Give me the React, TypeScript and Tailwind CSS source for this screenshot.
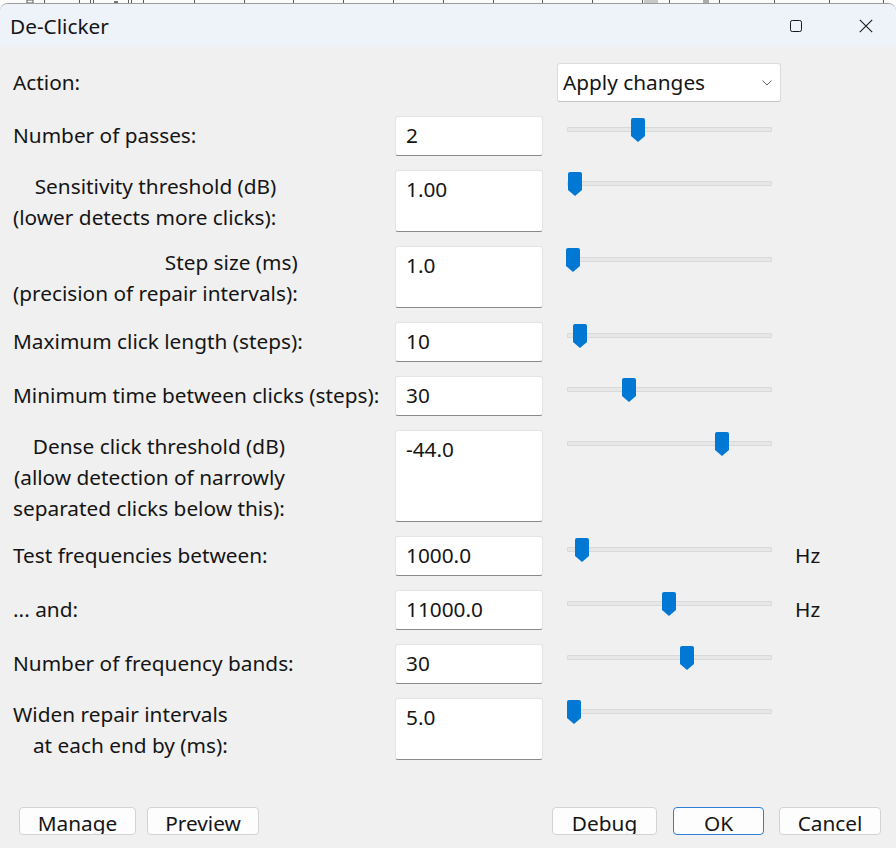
import React from "react";

type Row = {
  label: string[];
  value: string;
  box: string;
  thumb: number;
  unit?: string;
};

const rows: Row[] = [
  { label: ["Number of passes:"], value: "2", box: "h-[40px]", thumb: 71 },
  {
    label: ["Sensitivity threshold (dB)", "(lower detects more clicks):"],
    value: "1.00",
    box: "h-[62px]",
    thumb: 8,
  },
  {
    label: ["Step size (ms)", "(precision of repair intervals):"],
    value: "1.0",
    box: "h-[62px]",
    thumb: 6,
  },
  { label: ["Maximum click length (steps):"], value: "10", box: "h-[40px]", thumb: 13 },
  { label: ["Minimum time between clicks (steps):"], value: "30", box: "h-[40px]", thumb: 62 },
  {
    label: [
      "Dense click threshold (dB)",
      "(allow detection of narrowly",
      "separated clicks below this):",
    ],
    value: "-44.0",
    box: "h-[92px]",
    thumb: 155,
  },
  { label: ["Test frequencies between:"], value: "1000.0", box: "h-[40px]", thumb: 15, unit: "Hz" },
  { label: ["... and:"], value: "11000.0", box: "h-[40px]", thumb: 102, unit: "Hz" },
  { label: ["Number of frequency bands:"], value: "30", box: "h-[40px]", thumb: 120 },
  {
    label: ["Widen repair intervals", "at each end by (ms):"],
    value: "5.0",
    box: "h-[62px]",
    thumb: 7,
  },
];

// tick marks of the ruler belonging to the window behind the dialog
const ticks = [44, 79, 90, 93, 128, 131, 143, 194, 244, 293, 343, 393, 443, 493, 542, 592, 642, 669, 719, 774, 829, 883];

function Ruler() {
  return (
    <div className="h-[3px] bg-[#fbfbfb]">
      <svg width="896" height="3" className="block">
        {ticks.map((x) => (
          <rect key={x} x={x} y={0} width={1} height={3} fill="#5a5a5a" />
        ))}
        <rect x={27} y={0} width={6} height={3} fill="none" stroke="#5a5a5a" strokeWidth={1} />
        <rect x={114} y={1} width={4} height={2} fill="#777" />
        <rect x={644} y={0} width={14} height={3} fill="#c8c8c8" />
        <rect x={703} y={0} width={6} height={3} fill="#aaa" />
      </svg>
    </div>
  );
}

function Slider({ pos }: { pos: number }) {
  return (
    <div className="relative mt-[2px] ml-[24px] h-[24px] w-[205px] shrink-0">
      <div className="absolute left-0 right-0 top-[9px] h-[5px] rounded-[1px] border border-[#d9d9d9] bg-[#e7e7e7]" />
      <svg
        width="14"
        height="24"
        viewBox="0 0 14 24"
        className="absolute top-0"
        style={{ left: pos - 7 }}
      >
        <path d="M0 2 Q0 0 2 0 H12 Q14 0 14 2 V18 L7 24 L0 18 Z" fill="#0078d4" />
      </svg>
    </div>
  );
}

function Field({ value, box }: { value: string; box: string }) {
  return (
    <div
      className={`${box} w-[148px] shrink-0 rounded-[3px] border border-[#e4e4e4] border-b-[#8a8a8a] bg-white pl-[10px] pt-[3px] leading-[31px]`}
    >
      {value}
    </div>
  );
}

function Button({ children, primary }: { children: React.ReactNode; primary?: boolean }) {
  return (
    <div
      className={`h-[28px] overflow-hidden rounded-[4px] border bg-[#fdfdfd] pt-[2px] text-center leading-[26px] ${
        primary ? "border-[#2f7fd3]" : "border-[#d3d3d3]"
      }`}
    >
      {children}
    </div>
  );
}

export default function App() {
  return (
    <div
      className="h-[848px] w-[896px] overflow-hidden bg-[#fbfbfb] text-[20.8px] text-[#151515]"
      style={{ fontFamily: '"Noto Sans", "Open Sans", sans-serif' }}
    >
      <Ruler />
      <div className="flex h-[845px] flex-col overflow-hidden rounded-t-[8px] border-t border-[#9c9c9c] bg-[#f0f0f0]">
        {/* title bar */}
        <div className="flex h-[43px] shrink-0 items-center bg-[#eef2f9]">
          <div className="ml-[10px] leading-[30px]">De-Clicker</div>
          <div className="ml-auto flex items-center">
            <svg width="12" height="12" viewBox="0 0 12 12" className="mr-[57px]">
              <rect x="0.5" y="0.5" width="11" height="11" rx="1.8" fill="none" stroke="#1a1a1a" strokeWidth="1" />
            </svg>
            <svg width="14" height="14" viewBox="0 0 14 14" className="mr-[23px]">
              <path d="M0.8 0.8 L13.2 13.2 M13.2 0.8 L0.8 13.2" stroke="#1a1a1a" strokeWidth="1.1" />
            </svg>
          </div>
        </div>

        {/* body */}
        <div className="flex flex-1 flex-col pl-[13px] pt-[16px]">
          <div className="flex flex-col gap-[14px]">
            <div className="flex h-[39px] items-center">
              <div className="w-[544px] leading-[31px]">Action:</div>
              <div className="flex h-[39px] w-[224px] items-center rounded-[3px] border border-[#dcdcdc] border-b-[#c4c4c4] bg-white pl-[5px] pr-[8px]">
                <span className="leading-[31px]">Apply changes</span>
                <svg width="10" height="6" viewBox="0 0 10 6" className="ml-auto">
                  <path d="M0.5 0.5 L5 5 L9.5 0.5" fill="none" stroke="#5f5f5f" strokeWidth="1" />
                </svg>
              </div>
            </div>

            {rows.map((r) => {
              const single = r.label.length === 1;
              return (
                <div key={r.value + r.label[0]} className={`${r.box} flex items-start`}>
                  <div className={`w-[382px] shrink-0 ${single ? "pt-[4px]" : "pt-[1px]"}`}>
                    <div className="w-fit text-right leading-[31px]">
                      {r.label.map((l) => (
                        <div key={l}>{l}</div>
                      ))}
                    </div>
                  </div>
                  <Field value={r.value} box={r.box} />
                  <Slider pos={r.thumb} />
                  {r.unit && <div className="ml-[23px] pt-[4px] leading-[31px]">{r.unit}</div>}
                </div>
              );
            })}
          </div>

          {/* dialog buttons */}
          <div className="mt-auto mb-[13px] flex items-center pr-[15px]">
            <div className="ml-[6px] w-[117px]">
              <Button>Manage</Button>
            </div>
            <div className="ml-[11px] w-[112px]">
              <Button>Preview</Button>
            </div>
            <div className="ml-auto w-[105px]">
              <Button>Debug</Button>
            </div>
            <div className="ml-[16px] w-[91px]">
              <Button primary>OK</Button>
            </div>
            <div className="ml-[15px] w-[102px]">
              <Button>Cancel</Button>
            </div>
          </div>
        </div>
      </div>
    </div>
  );
}
